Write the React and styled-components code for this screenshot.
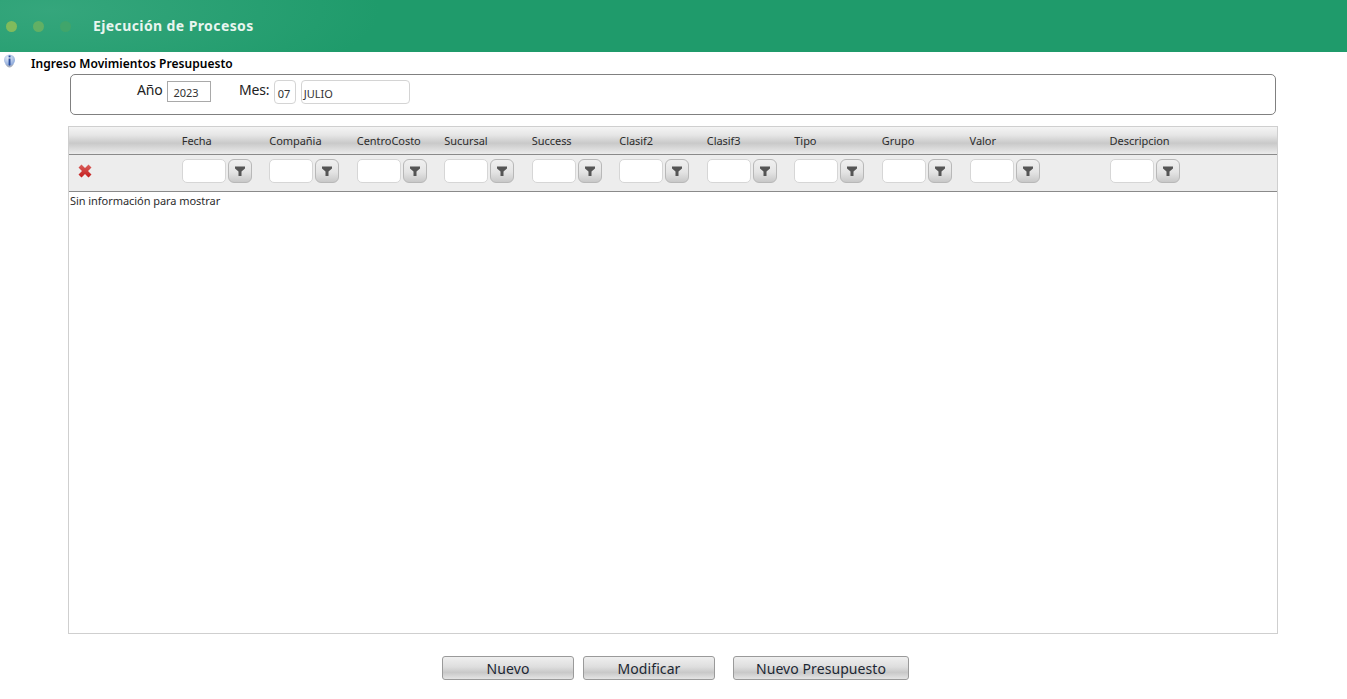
import React from "react";
import styled, { createGlobalStyle } from "styled-components";

const GlobalStyle = createGlobalStyle`
  html, body {
    margin: 0;
    padding: 0;
    background: #fff;
    font-family: "Noto Sans", "DejaVu Sans", sans-serif;
  }
`;

const Page = styled.div`
  width: 1347px;
  height: 699px;
  overflow: hidden;
`;

const Header = styled.div`
  height: 52px;
  display: flex;
  align-items: center;
  padding-left: 6px;
  background: radial-gradient(ellipse 330px 90px at 50px 10px, #35a67c 0%, #1f9b6b 100%);
`;

const Dot = styled.span`
  width: 11px;
  height: 11px;
  border-radius: 50%;
  margin-right: 16px;
  background: ${(p) => p.$color};
`;

const HeaderTitle = styled.div`
  margin-left: 6px;
  margin-top: -1px;
  color: #e8f5ef;
  font-size: 14px;
  font-weight: 700;
  letter-spacing: 0.4px;
`;

const SectionTitle = styled.div`
  height: 22px;
  display: flex;
  align-items: center;
  padding-left: 3px;
  font-size: 12px;
  font-weight: 600;
  color: #000;
`;

const TitleText = styled.span`
  margin-left: 15px;
  letter-spacing: 0.04px;
`;

const FilterBox = styled.div`
  box-sizing: border-box;
  width: 1206px;
  height: 41px;
  margin-left: 70px;
  border: 1px solid #808080;
  border-radius: 5px;
  display: flex;
  align-items: flex-start;
  padding-top: 5px;
  padding-left: 66px;
`;

const FieldLabel = styled.span`
  font-size: 14px;
  line-height: 20px;
  letter-spacing: -0.2px;
  color: #222;
  margin-right: ${(p) => p.$gap}px;
`;

const PlainInput = styled.div`
  box-sizing: border-box;
  height: 21px;
  width: 44px;
  margin-top: 1px;
  margin-right: 27.5px;
  border: 1px solid #a9a9a9;
  font-size: 11px;
  line-height: 21px;
  padding-left: 5px;
  color: #333;
`;

const RoundInput = styled.div`
  box-sizing: border-box;
  height: 24px;
  width: ${(p) => p.$width}px;
  margin-right: 5px;
  border: 1px solid #d4d4d4;
  border-radius: 4px;
  font-size: 11px;
  line-height: 25px;
  padding-left: ${(p) => p.$pad}px;
  color: #333;
`;

const Grid = styled.div`
  width: 1210px;
  height: 508px;
  margin: 11px 0 0 68px;
  box-sizing: border-box;
  border: 1px solid #cfcfcf;
  display: flex;
  flex-direction: column;
`;

const HeadRow = styled.div`
  height: 28px;
  flex: none;
  display: flex;
  align-items: center;
  box-sizing: border-box;
  background: linear-gradient(#f4f4f4 0%, #e6e6e6 30%, #c9c9c9 60%, #ececec 100%);
  border-bottom: 1px solid #8a8a8a;
  font-size: 11px;
  letter-spacing: -0.05px;
  color: #2c2c2c;
`;

const FilterRow = styled.div`
  height: 37px;
  flex: none;
  box-sizing: border-box;
  padding-bottom: 4px;
  display: flex;
  align-items: center;
  background: #ededed;
  border-bottom: 1px solid #8a8a8a;
`;

const Spacer = styled.div`
  width: 112.8px;
  flex: none;
  padding-left: 9px;
  box-sizing: border-box;
  display: flex;
  align-items: center;
`;

const Cell = styled.div`
  width: ${(p) => p.$width}px;
  flex: none;
  display: flex;
  align-items: center;
`;

const FilterInput = styled.div`
  width: 44px;
  height: 24px;
  box-sizing: border-box;
  background: #fff;
  border: 1px solid #d6d6d6;
  border-radius: 5px;
`;

const FilterButton = styled.div`
  width: 24px;
  height: 24px;
  margin-left: 2px;
  box-sizing: border-box;
  border: 1px solid #b8b8b8;
  border-radius: 6px;
  background: linear-gradient(#f0f0f0, #e4e4e4 55%, #c8c8c8);
  display: flex;
  align-items: center;
  justify-content: center;
`;

const EmptyText = styled.div`
  font-size: 11px;
  line-height: 18px;
  letter-spacing: -0.05px;
  padding-left: 1px;
  color: #2c2c2c;
`;

const Actions = styled.div`
  display: flex;
  margin: 22px 0 0 442px;
`;

const Button = styled.div`
  width: ${(p) => p.$width}px;
  height: 24px;
  margin-right: ${(p) => p.$gap}px;
  box-sizing: border-box;
  border: 1px solid #9a9a9a;
  border-radius: 3px;
  background: linear-gradient(#efefef 0%, #dedede 45%, #c8c8c8 70%, #e4e4e4 100%);
  font-size: 14px;
  line-height: 23px;
  letter-spacing: 0.08px;
  text-align: center;
  color: #1c2733;
`;

const columns = [
  { name: "Fecha", width: 87.5 },
  { name: "Compañia", width: 87.5 },
  { name: "CentroCosto", width: 87.5 },
  { name: "Sucursal", width: 87.5 },
  { name: "Success", width: 87.5 },
  { name: "Clasif2", width: 87.5 },
  { name: "Clasif3", width: 87.5 },
  { name: "Tipo", width: 87.5 },
  { name: "Grupo", width: 87.8 },
  { name: "Valor", width: 140 },
  { name: "Descripcion", width: 120 },
];

const InfoIcon = () => (
  <svg width="13" height="14" viewBox="0 0 13 14" style={{ marginTop: -4 }}>
    <defs>
      <radialGradient id="infoBall" cx="0.4" cy="0.3" r="0.8">
        <stop offset="0" stopColor="#e6edf8" />
        <stop offset="1" stopColor="#7f9fd6" />
      </radialGradient>
    </defs>
    <path d="M2 9.500q4.500 2.500 9 0q-2 4-4.500 4T2 9.500z" fill="#a9b0bd" />
    <circle cx="6.500" cy="6" r="5.500" fill="url(#infoBall)" />
    <rect x="5.600" y="1.500" width="1.900" height="1.900" fill="#2b4f9e" />
    <path d="M5.600 4.500h1.900v6.500l-1 .8-.9-.8z" fill="#2b4f9e" />
  </svg>
);

const ClearIcon = () => (
  <svg width="14" height="14" viewBox="0 0 14 14">
    <defs>
      <linearGradient id="clearRed" x1="0" y1="0" x2="0" y2="1">
        <stop offset="0" stopColor="#d9605c" />
        <stop offset="1" stopColor="#c41c1c" />
      </linearGradient>
    </defs>
    <path
      d="M3.500 0.500L7 4l3.500-3.500 3 3L10 7l3.500 3.500-3 3L7 10l-3.500 3.500-3-3L4 7 .500 3.500z"
      fill="url(#clearRed)"
    />
  </svg>
);

const FunnelIcon = () => (
  <svg width="12" height="12" viewBox="0 0 12 12">
    <path d="M1 1.500h10v2L7.500 6.500V11h-3V6.500L1 3.500z" fill="#555" />
  </svg>
);

export default function App() {
  return (
    <Page>
      <GlobalStyle />
      <Header>
        <Dot $color="#80bb5c" />
        <Dot $color="#62b064" />
        <Dot $color="#40a56b" />
        <HeaderTitle>Ejecución de Procesos</HeaderTitle>
      </Header>
      <SectionTitle>
        <InfoIcon />
        <TitleText>Ingreso Movimientos Presupuesto</TitleText>
      </SectionTitle>
      <FilterBox>
        <FieldLabel $gap={5}>Año</FieldLabel>
        <PlainInput>2023</PlainInput>
        <FieldLabel $gap={4.5}>Mes:</FieldLabel>
        <RoundInput $width={22} $pad={3}>07</RoundInput>
        <RoundInput $width={109} $pad={2}>JULIO</RoundInput>
      </FilterBox>
      <Grid>
        <HeadRow>
          <Spacer />
          {columns.map((c) => (
            <Cell key={c.name} $width={c.width}>{c.name}</Cell>
          ))}
        </HeadRow>
        <FilterRow>
          <Spacer>
            <ClearIcon />
          </Spacer>
          {columns.map((c) => (
            <Cell key={c.name} $width={c.width}>
              <FilterInput />
              <FilterButton>
                <FunnelIcon />
              </FilterButton>
            </Cell>
          ))}
        </FilterRow>
        <EmptyText>Sin información para mostrar</EmptyText>
      </Grid>
      <Actions>
        <Button $width={132} $gap={9}>Nuevo</Button>
        <Button $width={132} $gap={18}>Modificar</Button>
        <Button $width={176} $gap={0}>Nuevo Presupuesto</Button>
      </Actions>
    </Page>
  );
}
